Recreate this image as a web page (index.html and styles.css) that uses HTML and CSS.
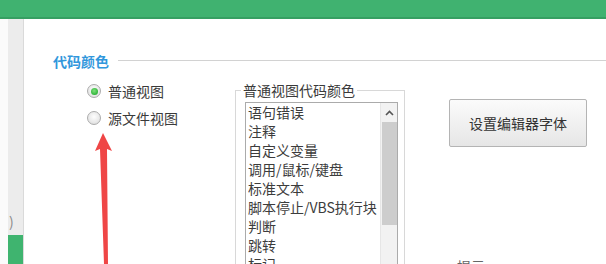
FILE: index.html
```html
<!DOCTYPE html>
<html lang="zh-CN">
<head>
<meta charset="utf-8">
<title>代码颜色</title>
<link rel="stylesheet" href="styles.css">
</head>
<body>
<div class="topbar"></div>
<div class="frame">
  <div class="gutter"></div>
  <aside class="sidebar">
    <span class="side-glyph">)</span>
    <div class="side-green"></div>
  </aside>
  <main class="main">
    <div class="section-head">
      <span class="section-title">代码颜色</span>
      <span class="section-rule"></span>
    </div>
    <div class="section-body">
      <div class="options">
        <label class="option"><span class="radio checked"></span><span>普通视图</span></label>
        <label class="option"><span class="radio"></span><span>源文件视图</span></label>
      </div>
      <fieldset class="group">
        <legend class="group-title">普通视图代码颜色</legend>
        <div class="listbox">
          <ul class="list">
            <li>语句错误</li>
            <li>注释</li>
            <li>自定义变量</li>
            <li>调用/鼠标/键盘</li>
            <li>标准文本</li>
            <li>脚本停止/VBS执行块</li>
            <li>判断</li>
            <li>跳转</li>
            <li>标记</li>
          </ul>
          <div class="scrollbar">
            <div class="scroll-up">
              <svg width="9" height="6" viewBox="0 0 9 6"><path d="M1 5 L4.5 1.5 L8 5" fill="none" stroke="#555" stroke-width="1.6"/></svg>
            </div>
            <div class="scroll-thumb"></div>
          </div>
        </div>
      </fieldset>
      <div class="actions">
        <button class="btn">设置编辑器字体</button>
        <div class="actions-note">提示</div>
      </div>
    </div>
  </main>
</div>
<svg class="annotation" width="606" height="264" viewBox="0 0 606 264">
  <polygon points="103,133 95,151 100,149 104,264 108,264 107,149 112,151" fill="#ef4646"/>
</svg>
</body>
</html>
```
FILE: styles.css
```css
html, body {
  margin: 0;
  padding: 0;
}
body {
  width: 606px;
  height: 264px;
  overflow: hidden;
  position: relative;
  background: #ffffff;
  font-family: "Noto Sans CJK SC", "Noto Sans", sans-serif;
  font-size: 14px;
  color: #3a3a3a;
}
.topbar {
  height: 17px;
  background: #40b270;
  border-bottom: 2px solid #369f62;
}
.frame {
  display: flex;
  height: 245px;
  overflow: hidden;
}
.gutter {
  width: 8px;
  background: #fbfbfb;
}
.sidebar {
  width: 15px;
  background: #ececec;
  border-right: 1px solid #dadada;
  display: flex;
  flex-direction: column;
  justify-content: flex-end;
}
.side-glyph {
  color: #8a8a8a;
  font-size: 14px;
  line-height: 16px;
  padding-left: 1px;
  margin-bottom: 6px;
}
.side-green {
  height: 29px;
  background: #3fb46f;
}
.main {
  flex: 1;
  padding: 35px 0 0 29px;
  min-width: 0;
  overflow: hidden;
}
.section-head {
  display: flex;
  align-items: center;
  height: 14px;
}
.section-title {
  color: #3197dc;
  font-weight: bold;
  font-size: 14px;
  line-height: 14px;
  white-space: nowrap;
}
.section-rule {
  flex: 1;
  height: 1px;
  background: #d2d2d2;
  margin-left: 9px;
  margin-top: -1px;
}
.section-body {
  display: flex;
  align-items: flex-start;
  margin-top: 15px;
}
.options {
  width: 148px;
  margin-left: 34px;
  padding-top: 1px;
  display: flex;
  flex-direction: column;
  gap: 13px;
}
.option {
  display: flex;
  align-items: center;
  gap: 7px;
  height: 14px;
  line-height: 14px;
  color: #3a3a3a;
  white-space: nowrap;
}
.radio {
  width: 12px;
  height: 12px;
  border: 1px solid #acacac;
  border-radius: 50%;
  background: radial-gradient(circle at 50% 40%, #fdfdfd 0%, #e8e8e8 60%, #d6d6d6 100%);
  display: flex;
  align-items: center;
  justify-content: center;
  flex: none;
}
.radio.checked::after {
  content: "";
  width: 7px;
  height: 7px;
  border-radius: 50%;
  background: radial-gradient(circle at 45% 40%, #7fe07a 0%, #2fb43a 70%, #25962f 100%);
}
.group {
  margin: 0;
  padding: 5px 6px 0 9px;
  border: 1px solid #d8d8d8;
  width: 153px;
  min-width: 0;
}
.group-title {
  padding: 0 2px;
  margin-left: -4px;
  font-size: 14px;
  line-height: 14px;
  color: #3a3a3a;
  white-space: nowrap;
}
.listbox {
  display: flex;
  border: 1px solid #ababab;
  height: 190px;
  background: #ffffff;
}
.list {
  list-style: none;
  margin: 0;
  padding: 0 0 0 2px;
  flex: 1;
  min-width: 0;
}
.list li {
  height: 19px;
  line-height: 19px;
  white-space: nowrap;
  overflow: hidden;
  color: #3c3c3c;
}
.scrollbar {
  width: 16px;
  border-left: 1px solid #e6e6e6;
  background: #f2f2f2;
  display: flex;
  flex-direction: column;
  align-items: center;
}
.scroll-up {
  height: 19px;
  width: 100%;
  display: flex;
  align-items: center;
  justify-content: center;
}
.scroll-thumb {
  width: 15px;
  height: 103px;
  background: #cdcdcd;
}
.actions {
  margin-left: 44px;
  margin-top: 16px;
  display: flex;
  flex-direction: column;
  align-items: flex-start;
}
.btn {
  width: 138px;
  height: 48px;
  border: 1px solid #b4b4b4;
  border-radius: 2px;
  background: linear-gradient(#fbfbfb, #e6e6e6);
  font-family: "Noto Sans CJK SC", "Noto Sans", sans-serif;
  font-size: 14px;
  color: #333333;
  padding: 0;
}
.actions-note {
  margin-top: 111px;
  margin-left: 8px;
  line-height: 16px;
  color: #666666;
}
.annotation {
  position: absolute;
  left: 0;
  top: 0;
  pointer-events: none;
}
```
